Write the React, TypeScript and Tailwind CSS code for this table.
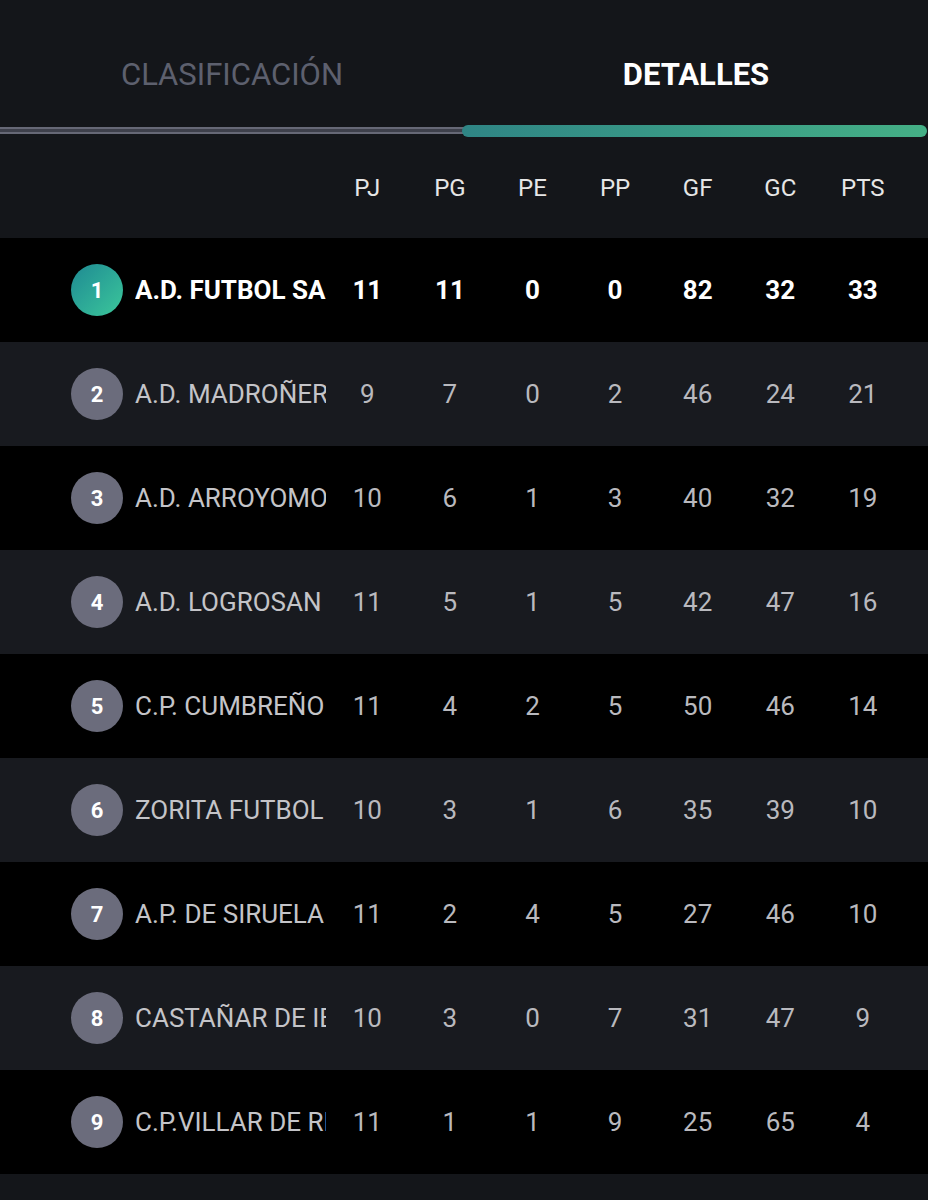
import React from "react";

const rows = [
  { pos: 1, name: "A.D. FUTBOL SAN VICENTE", v: [11, 11, 0, 0, 82, 32, 33] },
  { pos: 2, name: "A.D. MADROÑERA", v: [9, 7, 0, 2, 46, 24, 21] },
  { pos: 3, name: "A.D. ARROYOMOLINOS", v: [10, 6, 1, 3, 40, 32, 19] },
  { pos: 4, name: "A.D. LOGROSAN", v: [11, 5, 1, 5, 42, 47, 16] },
  { pos: 5, name: "C.P. CUMBREÑO", v: [11, 4, 2, 5, 50, 46, 14] },
  { pos: 6, name: "ZORITA FUTBOL SALA", v: [10, 3, 1, 6, 35, 39, 10] },
  { pos: 7, name: "A.P. DE SIRUELA", v: [11, 2, 4, 5, 27, 46, 10] },
  { pos: 8, name: "CASTAÑAR DE IBOR", v: [10, 3, 0, 7, 31, 47, 9] },
  { pos: 9, name: "C.P.VILLAR DE RENA", v: [11, 1, 1, 9, 25, 65, 4] },
];

const heads = ["PJ", "PG", "PE", "PP", "GF", "GC", "PTS"];

export default function App() {
  return (
    <div
      className="w-[928px] h-[1200px] bg-[#14161a] overflow-hidden"
      style={{ fontFamily: "Roboto, 'Liberation Sans', sans-serif" }}
    >
      {/* Tabs */}
      <div className="flex h-[124px] pt-[52px]">
        <div className="w-[464px] text-center leading-[46px] text-[31px] text-[#5d606e]">
          CLASIFICACIÓN
        </div>
        <div className="w-[464px] text-center leading-[46px] text-[31px] font-bold text-white">
          DETALLES
        </div>
      </div>
      <div className="flex items-center h-[13px]">
        <div className="w-[464px] h-[7px] bg-[#3e404b] border-y-[2px] border-[#666876]" />
        <div className="flex-1 h-[12px] rounded-full bg-gradient-to-r from-[#2f8585] to-[#45b086] -ml-[2px] mr-[1px]" />
      </div>
      {/* Header */}
      <div className="flex items-center h-[101px] pl-[326px]">
        {heads.map((h) => (
          <div key={h} className="w-[82.6px] text-center text-[24px] text-[#e6e6e6]">
            {h}
          </div>
        ))}
      </div>
      {/* Rows */}
      {rows.map((r, i) => {
        const first = i === 0;
        return (
          <div
            key={r.pos}
            className={`flex items-center h-[104px] ${i % 2 === 0 ? "bg-black" : "bg-[#181a1f]"}`}
          >
            <div className="w-[71px]" />
            <div
              className={`w-[52px] h-[52px] rounded-full flex items-center justify-center text-[22px] font-bold text-white ${
                first ? "bg-gradient-to-br from-[#1f8a92] to-[#3cc79a]" : "bg-[#6b6c7c]"
              }`}
            >
              {r.pos}
            </div>
            <div
              className={`ml-[12px] w-[191px] overflow-hidden whitespace-nowrap text-[26px] ${
                first ? "font-bold text-white" : "text-[#c4c4c8]"
              }`}
            >
              {r.name}
            </div>
            {r.v.map((n, j) => (
              <div
                key={j}
                className={`w-[82.6px] text-center text-[26px] ${
                  first ? "font-bold text-white" : "text-[#b9b9be]"
                }`}
              >
                {n}
              </div>
            ))}
          </div>
        );
      })}
    </div>
  );
}
